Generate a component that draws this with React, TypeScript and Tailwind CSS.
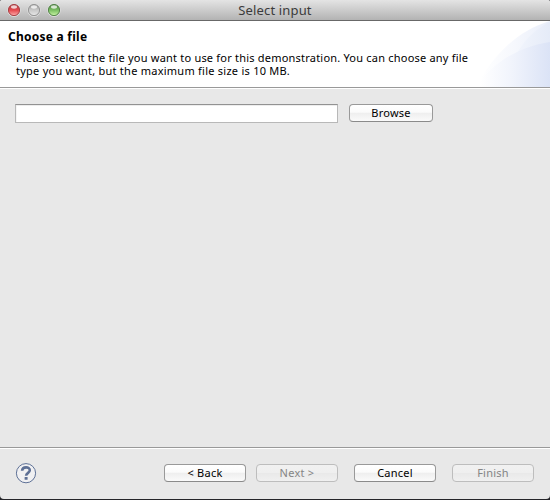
import React from "react";

function Light({ id, edge, core, glow }: { id: string; edge: string; core: string; glow: string }) {
  return (
    <svg width="14" height="14" viewBox="0 0 14 14" className="block">
      <defs>
        <linearGradient id={id} x1="0" y1="0" x2="0" y2="1">
          <stop offset="0" stopColor={edge} />
          <stop offset=".5" stopColor={core} />
          <stop offset="1" stopColor={glow} />
        </linearGradient>
      </defs>
      <circle cx="7" cy="7.4" r="6.2" fill="none" stroke="#eeeeee" strokeWidth="1" opacity=".6" />
      <circle cx="7" cy="7" r="5.6" fill={`url(#${id})`} stroke={edge} strokeWidth="1" />
      <ellipse cx="7" cy="4" rx="3" ry="1.7" fill="#fff" opacity=".75" />
    </svg>
  );
}

function PushButton({ label, width, disabled }: { label: string; width: string; disabled?: boolean }) {
  const look = disabled
    ? "border-[#bdbdbd] text-[#858585] bg-[linear-gradient(#f1f1f1_0%,#efefef_48%,#e9e9e9_52%,#f0f0f0_100%)]"
    : "border-[#999] border-b-[#8a8a8a] text-black bg-[linear-gradient(#fff_0%,#fbfbfb_45%,#efefef_52%,#fafafa_100%)]";
  return (
    <button
      disabled={disabled}
      className={`flex h-[18px] shrink-0 items-center justify-center rounded-[4px] border text-[11px] leading-[16px] ${width} ${look}`}
    >
      <span className="block whitespace-pre tracking-[0.25px]">{label}</span>
    </button>
  );
}

export default function App() {
  return (
    <div className="h-[500px] w-[550px] overflow-hidden bg-[#252529]">
      <div className="flex h-[499px] flex-col overflow-hidden rounded-t-[2px] rounded-b-[4px] bg-[#e8e8e8] font-['Lucida_Grande','Noto_Sans','Open_Sans',sans-serif] text-black">
        <header className="grid h-[21px] shrink-0 grid-cols-[1fr_auto_1fr] items-center border-b border-[#686868] bg-[linear-gradient(#e4e4e4,#b3b3b3)]">
          <div className="flex gap-[6px] pl-[7px]">
            <Light id="close" edge="#a84347" core="#e4474c" glow="#ffabab" />
            <Light id="minimize" edge="#969696" core="#c9c9c9" glow="#e8e8e8" />
            <Light id="zoom" edge="#55844a" core="#78bd60" glow="#c9f7a5" />
          </div>
          <h1 className="text-[13px] leading-[20px] tracking-[0.15px] text-[#3b3b3b]">Select input</h1>
        </header>

        <section className="grid h-[67px] shrink-0 border-b border-[#999] bg-white">
          <svg width="100" height="66" viewBox="0 0 100 66" className="col-start-1 row-start-1 justify-self-end">
            <defs>
              <linearGradient id="outerArc" gradientUnits="userSpaceOnUse" x1="30" y1="0" x2="100" y2="0">
                <stop offset="0" stopColor="#fff" />
                <stop offset=".5" stopColor="#f6f8fd" />
                <stop offset="1" stopColor="#e9eefa" />
              </linearGradient>
              <linearGradient id="middleArc" gradientUnits="userSpaceOnUse" x1="60" y1="0" x2="100" y2="0">
                <stop offset="0" stopColor="#f4f7fd" />
                <stop offset="1" stopColor="#e5ebf8" />
              </linearGradient>
              <linearGradient id="innerArc" gradientUnits="userSpaceOnUse" x1="30" y1="0" x2="100" y2="0">
                <stop offset="0" stopColor="#fff" />
                <stop offset=".45" stopColor="#f1f4fc" />
                <stop offset="1" stopColor="#dbe3f6" />
              </linearGradient>
            </defs>
            <path d="M26 66C42 36 66 10 100 0V66Z" fill="url(#outerArc)" />
            <path d="M54 66C61 36 76 12 100 1V66Z" fill="url(#middleArc)" />
            <path d="M26 66C42 42 68 26 100 21V66Z" fill="url(#innerArc)" />
          </svg>
          <div className="col-start-1 row-start-1 pl-2 pt-[8px]">
            <h2 className="text-[12px] font-bold leading-[16px] tracking-[0.25px]">Choose a file</h2>
            <p className="whitespace-nowrap pl-2 pt-[6px] text-[11px] leading-[13px]">
              <span className="block tracking-[0.21px]">Please select the file you want to use for this demonstration. You can choose any file</span>
              <span className="block tracking-[0.25px]">type you want, but the maximum file size is 10 MB.</span>
            </p>
          </div>
        </section>

        <main className="flex flex-1 items-start gap-[11px] border-t border-white pl-[15px] pt-[15px]">
          <input
            aria-label="File"
            className="h-[19px] w-[323px] border border-[#b8b8b8] border-t-[#929292] bg-white px-1 text-[11px] shadow-[inset_0_1px_0_#ededed,inset_1px_0_0_#f5f5f5] outline-none"
          />
          <PushButton label="Browse" width="w-[84px]" />
        </main>

        <footer className="h-[52px] shrink-0 border-t border-[#999]">
          <div className="flex h-full items-start border-t border-white pl-[15px] pr-[16px] pt-[14px]">
            <svg width="22" height="22" viewBox="0 0 22 22" className="mr-auto">
              <circle cx="11" cy="10.2" r="9.6" fill="#f0f0f2" stroke="#5e7196" />
              <path d="M7.1 7.8C7.3 3.3 14.8 3.3 14.8 7.3C14.8 9.9 11.1 9.8 11.1 12.8" fill="none" stroke="#5e7095" strokeWidth="2.6" />
              <rect x="9.6" y="14.1" width="3" height="2.7" rx=".5" fill="#5e7095" />
            </svg>
            <div className="flex gap-4 pt-px">
              <div className="flex gap-[10px]">
                <PushButton label="< Back" width="w-[82px]" />
                <PushButton label="Next >" width="w-[82px]" disabled />
              </div>
              <PushButton label="Cancel" width="w-[82px]" />
              <PushButton label="Finish" width="w-[82px]" disabled />
            </div>
          </div>
        </footer>
      </div>
    </div>
  );
}
